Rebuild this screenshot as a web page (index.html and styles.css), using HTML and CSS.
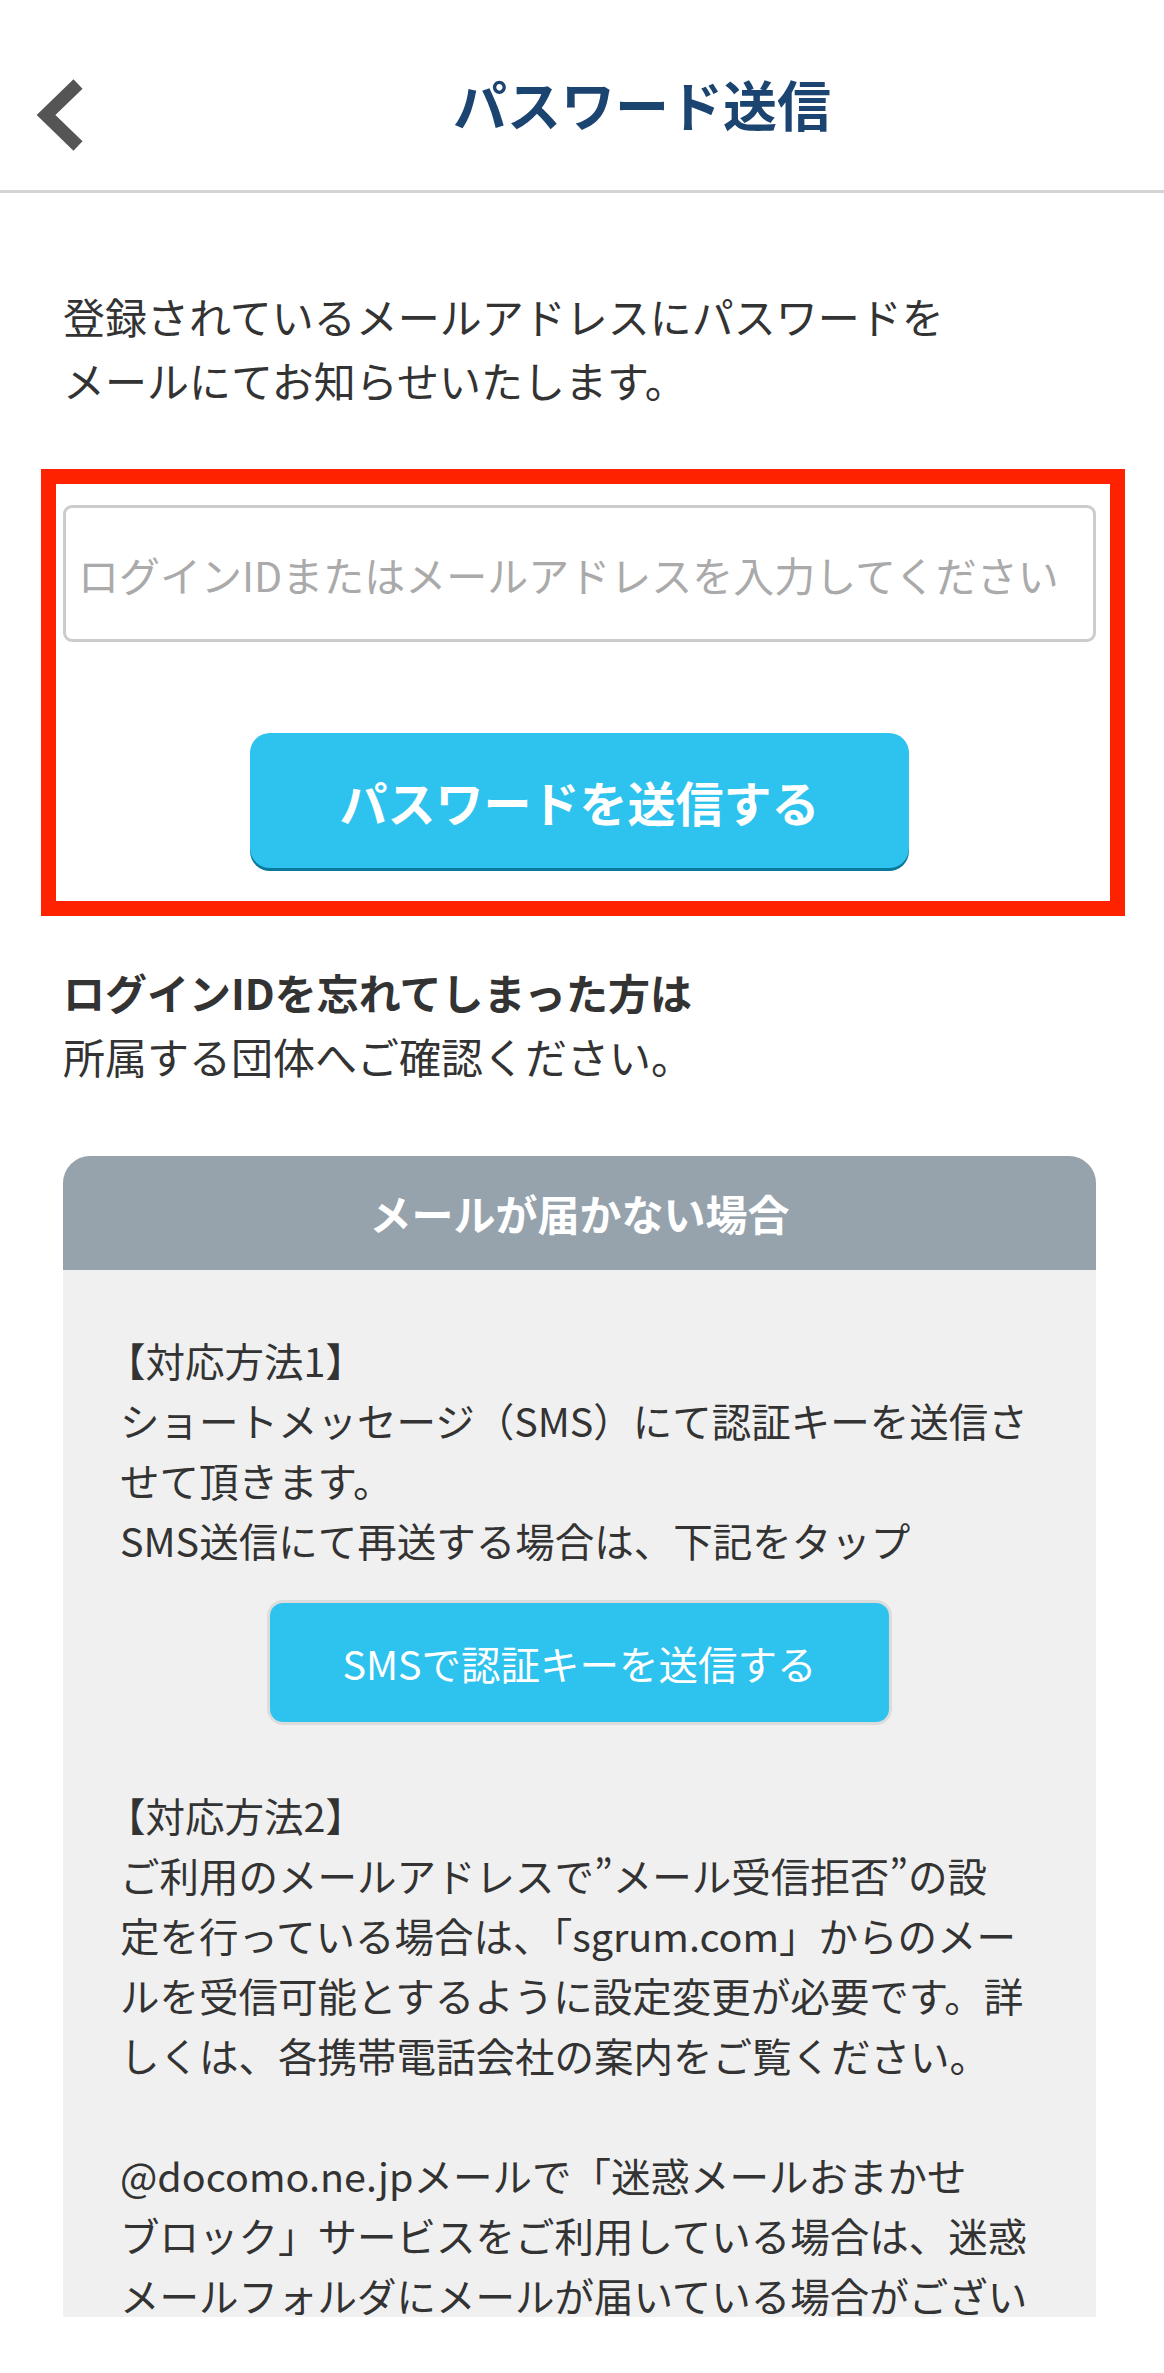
FILE: index.html
```html
<!DOCTYPE html>
<html lang="ja">
<head>
    <meta charset="UTF-8">
    <meta name="viewport" content="width=device-width, initial-scale=1.0">
    <title>パスワード送信</title>
    <link rel="stylesheet" href="styles.css">
</head>
<body>

<header class="topbar">
    <a class="back-btn" href="#" aria-label="戻る">
        <svg width="120" height="190" viewBox="0 0 120 190">
            <polyline points="78,84 46,115 78,146" fill="none" stroke="#555" stroke-width="13" stroke-linejoin="miter"/>
        </svg>
    </a>
    <h1 class="topbar-title">パスワード送信</h1>
</header>

<main class="content">
    <p class="lead">登録されているメールアドレスにパスワードを<br>メールにてお知らせいたします。</p>

    <!-- highlighted form area -->
    <form class="reset-form" onsubmit="return false;">
        <input type="text" class="login-input" name="login" placeholder="ログインIDまたはメールアドレスを入力してください">
        <button type="submit" class="send-btn">パスワードを送信する</button>
    </form>

    <p class="forgot"><strong>ログインIDを忘れてしまった方は</strong><br>所属する団体へご確認ください。</p>

    <section class="notice">
        <h2 class="notice-title">メールが届かない場合</h2>
        <div class="notice-body">
            <p><span class="bracket">【</span>対応方法1】<br>ショートメッセージ（SMS）にて認証キーを送信さ<br>せて頂きます。<br>SMS送信にて再送する場合は、下記をタップ</p>
            <button type="button" class="sms-btn">SMSで認証キーを送信する</button>
            <p><span class="bracket">【</span>対応方法2】<br>ご利用のメールアドレスで”メール受信拒否”の設<br>定を行っている場合は、「sgrum.com」からのメー<br>ルを受信可能とするように設定変更が必要です。詳<br>しくは、各携帯電話会社の案内をご覧ください。<br><br>@docomo.ne.jpメールで「迷惑メールおまかせ<br>ブロック」サービスをご利用している場合は、迷惑<br>メールフォルダにメールが届いている場合がござい</p>
        </div>
    </section>
</main>

</body>
</html>
```

FILE: styles.css
```css
body {
    font-family: "Noto Sans CJK JP", "Noto Sans", sans-serif;
    background-color: #ffffff;
    color: #333333;
    margin: 0;
    width: 1164px;
}
/* top bar */
.topbar {
    display: flex;
    height: 190px;
    border-bottom: 3px solid #d4d4d4;
}
.back-btn {
    display: block;
    width: 120px;
    flex-shrink: 0;
}
.back-btn svg {
    display: block;
}
.topbar-title {
    flex: 1;
    margin: 0;
    padding-top: 68px;
    text-align: center;
    font-size: 54px;
    line-height: 72px;
    font-weight: 700;
    color: #1c4470;
}
.content {
    padding: 0 68px 56px 63px;
}
.lead {
    margin: 91px 0 0;
    font-size: 42px;
    line-height: 64px;
}
/* red highlight box */
.reset-form {
    margin: 57px -29px 0 -22px;
    padding: 21px 14px 33px 7px;
    border: 15px solid #ff2200;
}
.login-input {
    display: block;
    box-sizing: border-box;
    width: 100%;
    height: 137px;
    margin: 0;
    padding: 0 12px;
    border: 3px solid #cccccc;
    border-radius: 9px;
    font-family: inherit;
    font-size: 41px;
    color: #333;
    background-color: #ffffff;
}
.login-input::placeholder {
    color: #aaaaaa;
}
.login-input:focus {
    outline: none;
}
.send-btn {
    display: block;
    width: 659px;
    height: 135px;
    margin: 91px auto 0;
    border: none;
    border-radius: 20px;
    background-color: #2ec2ee;
    box-shadow: 0 3px 0 #0a7a9c;
    color: #ffffff;
    font-family: inherit;
    font-size: 48px;
    font-weight: 700;
    cursor: pointer;
}
.forgot {
    margin: 44px 0 0;
    font-size: 42px;
    line-height: 64px;
}
.forgot strong {
    font-weight: 700;
}
/* notice box */
.notice {
    margin-top: 68px;
}
.notice-title {
    margin: 0;
    height: 114px;
    line-height: 114px;
    border-radius: 27px 27px 0 0;
    background-color: #96a3ad;
    color: #ffffff;
    text-align: center;
    font-size: 42px;
    font-weight: 700;
}
.notice-body {
    box-sizing: border-box;
    height: 1047px;
    padding: 60px 57px 0 57px;
    background-color: #f0f0f0;
    font-size: 39.5px;
    line-height: 60px;
}
.notice-body p {
    margin: 0;
    white-space: nowrap;
}
.bracket {
    margin-left: -14px;
}
.sms-btn {
    display: block;
    width: 625px;
    height: 125px;
    margin: 30px auto 60px;
    border: 3px solid #dcdcdc;
    border-radius: 16px;
    background-color: #2ec2ee;
    color: #ffffff;
    font-family: inherit;
    font-size: 39.5px;
    cursor: pointer;
}
```
